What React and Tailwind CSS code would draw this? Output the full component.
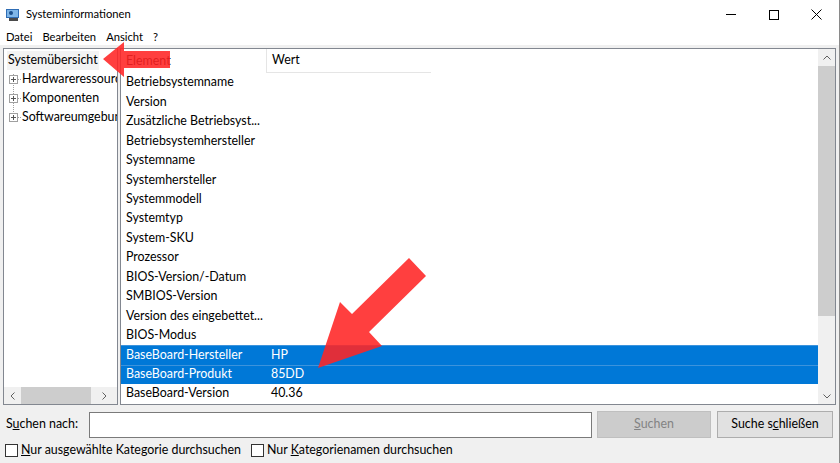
import React from "react";

const rows = [
  ["Betriebsystemname", ""],
  ["Version", ""],
  ["Zusätzliche Betriebsyst...", ""],
  ["Betriebsystemhersteller", ""],
  ["Systemname", ""],
  ["Systemhersteller", ""],
  ["Systemmodell", ""],
  ["Systemtyp", ""],
  ["System-SKU", ""],
  ["Prozessor", ""],
  ["BIOS-Version/-Datum", ""],
  ["SMBIOS-Version", ""],
  ["Version des eingebettet...", ""],
  ["BIOS-Modus", ""],
  ["BaseBoard-Hersteller", "HP", true],
  ["BaseBoard-Produkt", "85DD", true],
  ["BaseBoard-Version", "40.36"],
];

const PlusBox = () => (
  <span className="w-[9px] h-[9px] border border-[#a0a0a0] bg-white flex items-center justify-center relative shrink-0">
    <span className="absolute w-[5px] h-px bg-[#555]" />
    <span className="absolute w-px h-[5px] bg-[#555]" />
  </span>
);

const Checkbox = ({ children }) => (
  <label className="flex items-center gap-[3px]">
    <span className="w-[13px] h-[13px] border border-[#333] bg-white" />
    <span>{children}</span>
  </label>
);

const App = () => {
  return (
    <div
      className="relative w-[840px] h-[463px] overflow-hidden bg-white border-r border-[#8a8a8a] text-[12.4px] text-black"
      style={{ fontFamily: 'Lato, "Segoe UI", sans-serif' }}
    >
      {/* title bar */}
      <div className="h-[29px] flex items-center text-[11.2px]">
        <svg width="16" height="16" viewBox="0 0 16 16" className="ml-[5px] mr-[5px]">
          <rect x="1" y="2" width="13" height="9" fill="#2f6db5" />
          <rect x="2" y="3" width="11" height="7" fill="#7fb6e8" />
          <rect x="4" y="11" width="9" height="3" fill="#4a4a4a" />
          <circle cx="6" cy="6" r="2" fill="#1b4f8c" />
        </svg>
        <span>Systeminformationen</span>
        <div className="ml-auto flex items-center">
          <div className="w-[43px] h-[29px] flex items-center justify-center">
            <span className="w-[10px] h-px bg-black" />
          </div>
          <div className="w-[43px] h-[29px] flex items-center justify-center">
            <span className="w-[10px] h-[10px] border border-black" />
          </div>
          <div className="w-[43px] h-[29px] flex items-center justify-center mr-[1px]">
            <svg width="11" height="11" viewBox="0 0 11 11">
              <path d="M0.5 0.5 L10.5 10.5 M10.5 0.5 L0.5 10.5" stroke="#000" strokeWidth="1" />
            </svg>
          </div>
        </div>
      </div>

      {/* menu bar */}
      <div className="h-[16px] flex items-center gap-[10px] pl-[6px] leading-none text-[11.2px]">
        <span>Datei</span>
        <span>Bearbeiten</span>
        <span>Ansicht</span>
        <span>?</span>
      </div>

      {/* body */}
      <div className="bg-[#f0f0f0] h-[418px] pt-[3px] px-[3px] flex flex-col">
        <div className="flex gap-[2px] h-[357px]">
          {/* tree */}
          <div className="w-[115px] border border-[#828790] bg-white flex flex-col">
            <div className="flex-1 pt-[2px] relative">
              <div className="h-[19px] flex items-center pl-[3px]">
                <span className="bg-[#f3f3f3] px-[1px]">Systemübersicht</span>
              </div>
              <div className="absolute left-[9px] top-[25px] h-[48px] border-l border-dotted border-[#a0a0a0]" />
              {["Hardwareressourcen", "Komponenten", "Softwareumgebung"].map((t) => (
                <div key={t} className="h-[19px] flex items-center pl-[5px] whitespace-nowrap overflow-hidden relative">
                  <PlusBox />
                  <span className="w-[3px] shrink-0 mr-[1px] border-t border-dotted border-[#a0a0a0]" />
                  <span>{t}</span>
                </div>
              ))}
            </div>
            <div className="h-[17px] bg-[#f0f0f0] flex items-center">
              <div className="w-[17px] flex justify-center text-[#606060]">
                <svg width="6" height="8" viewBox="0 0 6 8">
                  <path d="M4.5 0.5 L1 4 L4.5 7.5" stroke="#606060" fill="none" />
                </svg>
              </div>
              <div className="w-[70px] h-[17px] bg-[#cdcdcd]" />
              <div className="flex-1 flex justify-center">
                <svg width="6" height="8" viewBox="0 0 6 8">
                  <path d="M1.5 0.5 L5 4 L1.5 7.5" stroke="#606060" fill="none" />
                </svg>
              </div>
            </div>
          </div>

          {/* list */}
          <div className="flex-1 border border-[#828790] bg-white flex">
            <div className="flex-1 flex flex-col">
              <div className="h-[24px] flex items-center shrink-0">
                <div className="w-[145px] pl-[5px]">Element</div>
                <div className="w-[165px] h-full pl-[5px] flex items-center border-l border-b border-[#e5e5e5]">Wert</div>
              </div>
              {rows.map(([k, v, sel]) => (
                <div
                  key={k}
                  className={`h-[19.45px] shrink-0 flex items-center whitespace-nowrap ${
                    sel ? "bg-[#0078d7] text-white border-t border-[#3c93dc]" : ""
                  }`}
                >
                  <div className="w-[145px] pl-[5px]">{k}</div>
                  <div className="pl-[5px]">{v}</div>
                </div>
              ))}
            </div>
            <div className="w-[17px] bg-[#f0f0f0] flex flex-col items-center">
              <div className="h-[17px] flex items-center justify-center">
                <svg width="8" height="6" viewBox="0 0 8 6">
                  <path d="M0.5 4.5 L4 1 L7.5 4.5" stroke="#606060" fill="none" />
                </svg>
              </div>
              <div className="w-[17px] h-[250px] bg-[#cdcdcd]" />
              <div className="flex-1" />
              <div className="h-[17px] flex items-center justify-center">
                <svg width="8" height="6" viewBox="0 0 8 6">
                  <path d="M0.5 1.5 L4 5 L7.5 1.5" stroke="#606060" fill="none" />
                </svg>
              </div>
            </div>
          </div>
        </div>

        {/* search row */}
        <div className="flex items-center mt-[6px] h-[27px]">
          <span className="w-[86px] pl-[3px]">
            S<span className="underline">u</span>chen nach:
          </span>
          <div className="w-[503px] h-[26px] bg-white border border-[#7a7a7a]" />
          <div className="ml-[5px] w-[114px] h-[27px] bg-[#cccccc] border border-[#bfbfbf] text-[#838383] flex items-center justify-center">
            <span>
              <span className="underline">S</span>uchen
            </span>
          </div>
          <div className="ml-[6px] w-[116px] h-[27px] bg-[#e1e1e1] border border-[#adadad] flex items-center justify-center">
            <span>
              Suche s<span className="underline">c</span>hließen
            </span>
          </div>
        </div>

        {/* checkbox row */}
        <div className="flex items-center gap-[10px] mt-[3px] pl-[2px]">
          <Checkbox>
            <span className="underline">N</span>ur ausgewählte Kategorie durchsuchen
          </Checkbox>
          <Checkbox>
            Nur <span className="underline">K</span>ategorienamen durchsuchen
          </Checkbox>
        </div>
      </div>

      {/* red arrows overlay */}
      <svg className="absolute left-0 top-0 pointer-events-none" width="840" height="463">
        <polygon
          points="103,59 124,42 124,51 170,51 170,68 124,68 124,77"
          fill="#ff2424"
          fillOpacity="0.88"
        />
        <polygon
          points="318,368 340,302 352,314 409,258 426,276 369,332 382,346"
          fill="#ff2424"
          fillOpacity="0.88"
        />
      </svg>
    </div>
  );
};

export default App;
